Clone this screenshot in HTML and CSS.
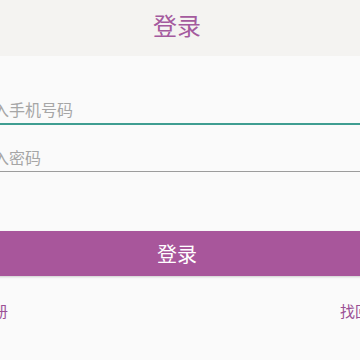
FILE: index.html
```html
<!DOCTYPE html>
<html lang="zh">
<head>
<meta charset="utf-8">
<title>登录</title>
<link rel="stylesheet" href="styles.css">
</head>
<body>
<div class="page">
  <header class="topbar"><h1 class="title">登录</h1></header>
  <main class="form">
    <div class="field field-active"><input class="input" type="tel" placeholder="请输入手机号码"></div>
    <div class="field"><input class="input" type="password" placeholder="请输入密码"></div>
    <button class="btn" type="button">登录</button>
    <div class="links">
      <a class="link link-left" href="#">注册</a>
      <a class="link link-right" href="#">找回密码</a>
    </div>
  </main>
</div>
</body>
</html>
```
FILE: styles.css
```css
html, body {
  margin: 0;
  padding: 0;
  background: #fafafa;
  overflow: hidden;
  width: 360px;
  height: 360px;
}
.page {
  font-family: "Noto Sans CJK SC", "Noto Sans", sans-serif;
  margin-left: -40px;
  width: 434px;
}
.topbar {
  height: 56px;
  background: #f4f3f1;
  display: flex;
  align-items: center;
  justify-content: center;
}
.title {
  margin: 0;
  font-size: 24px;
  font-weight: 400;
  color: #a45a9e;
  line-height: 1;
  margin-top: -6px;
}
.form {
  padding-top: 38px;
  display: flex;
  flex-direction: column;
}
.field {
  height: 28px;
  border-bottom: 1px solid #9c9c9c;
  display: flex;
  align-items: center;
}
.field-active {
  height: 29px;
  border-bottom: 2px solid #3f9d91;
  margin-bottom: 18px;
}
.input {
  border: none;
  outline: none;
  background: transparent;
  font-family: inherit;
  font-size: 16px;
  padding: 0 0 0 1px;
  margin: 0;
  width: 100%;
  color: #333;
}
.input::placeholder {
  color: #a6a6a6;
}
.btn {
  margin-top: 59px;
  height: 45px;
  border: none;
  background: #a8569b;
  color: #ffffff;
  font-family: inherit;
  font-size: 20px;
  box-shadow: 0 1px 2px rgba(0,0,0,0.18);
  padding: 0;
  width: 100%;
}
.links {
  display: flex;
  justify-content: space-between;
  margin-top: 26px;
  padding: 0 0 0 18px;
  margin-right: -6px;
}
.link {
  font-size: 15px;
  line-height: 18px;
  color: #9b4f95;
  text-decoration: none;
}
```
